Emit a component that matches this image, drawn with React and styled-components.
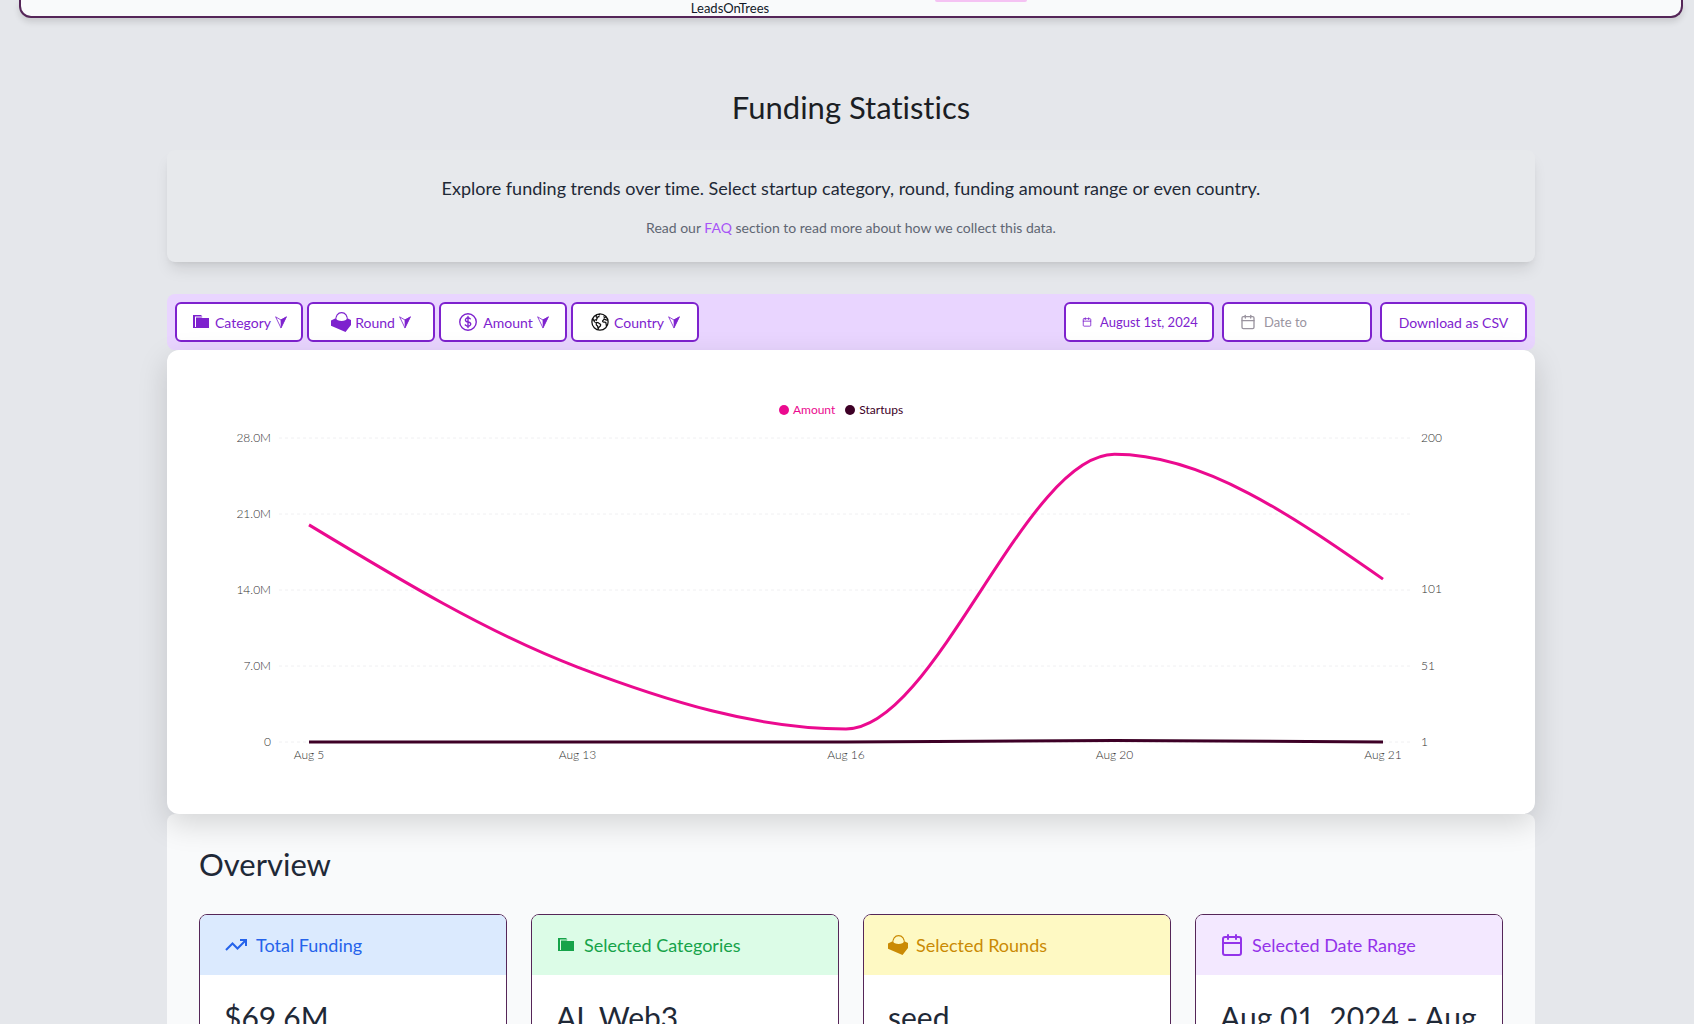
import React from "react";
import styled, { createGlobalStyle } from "styled-components";
import { Calendar, TrendingUp } from "lucide-react";
import { HiOutlineCurrencyDollar } from "react-icons/hi2";
import { IoEarthOutline } from "react-icons/io5";

const points = [
  { label: "Aug 5", amount: 20, startups: 1 },
  { label: "Aug 13", amount: 6.9, startups: 1 },
  { label: "Aug 16", amount: 1.2, startups: 1 },
  { label: "Aug 20", amount: 26.5, startups: 2 },
  { label: "Aug 21", amount: 15, startups: 1 },
];

const amountTicks = ["28.0M", "21.0M", "14.0M", "7.0M", "0"];
const startupTicks = [
  { label: "200", y: 20 },
  { label: "101", y: 171 },
  { label: "51", y: 248 },
  { label: "1", y: 324 },
];

const GRID_TOP = 20;
const GRID_BOTTOM = 324;
const FIRST_X = 142;
const STEP_X = 268.5;

const toY = (value, min, max) =>
  GRID_BOTTOM - ((value - min) / (max - min)) * (GRID_BOTTOM - GRID_TOP);

// monotone cubic, keeps the curve from overshooting the points
const monotonePath = (ys) => {
  const slopes = ys.slice(1).map((y, i) => (y - ys[i]) / STEP_X);
  const tangents = ys.map((_, i) => {
    if (i === 0 || i === ys.length - 1) return 0;
    const a = slopes[i - 1];
    const b = slopes[i];
    return (
      (Math.sign(a) + Math.sign(b)) *
      Math.min(Math.abs(a), Math.abs(b), Math.abs(a + b) / 4)
    );
  });
  const last = ys.length - 1;
  tangents[0] = (3 * slopes[0] - tangents[1]) / 2;
  tangents[last] = (3 * slopes[last - 1] - tangents[last - 1]) / 2;

  const third = STEP_X / 3;
  let d = `M${FIRST_X},${ys[0]}`;
  for (let i = 0; i < last; i++) {
    const x0 = FIRST_X + i * STEP_X;
    const x1 = x0 + STEP_X;
    d += `C${x0 + third},${ys[i] + tangents[i] * third},${x1 - third},${
      ys[i + 1] - tangents[i + 1] * third
    },${x1},${ys[i + 1]}`;
  }
  return d;
};

const FolderIcon = () => (
  <svg width="20" height="14" viewBox="-2 0 20 14" fill="currentColor">
    <path d="M0 0h8l1.500 1.500H2V12h1v1H0z" />
    <path d="M3 2.500h5.500l1 .5H16v10H2v-1h1z" />
  </svg>
);

const RoundIcon = () => (
  <svg width="20" height="20" viewBox="0 0 20 20">
    <path
      d="M0 8.500 4.600 6.200C5.300 8 8 9 10.700 9S15.600 8 16.400 6.200L20 8v5l-5.500 7L0 13.800z"
      fill="currentColor"
    />
    <path
      d="M5 8.500C4.200 4 7 .6 10.600.6S17 4 16.100 8.500"
      fill="none"
      stroke="currentColor"
      strokeWidth="1.100"
    />
  </svg>
);

const ArrowIcon = () => (
  <svg width="12" height="13" viewBox="0 0 12 13">
    <path
      d="M.6.8 6 4 11.400.8 6 12z"
      fill="none"
      stroke="currentColor"
      strokeWidth=".8"
    />
    <path d="M5.600 3.800 11.800.4 5.800 12.500z" fill="currentColor" />
  </svg>
);

const Chart = () => (
  <ChartSvg viewBox="0 0 1368 356" role="img" aria-label="Funding over time">
    {amountTicks.map((tick, i) => {
      const y = GRID_TOP + i * 76;
      return (
        <g key={tick}>
          <line
            x1="112"
            x2="1244"
            y1={y}
            y2={y}
            stroke="#f0f0f2"
            strokeDasharray="3 3"
          />
          <text x="104" y={y + 4} textAnchor="end">
            {tick}
          </text>
        </g>
      );
    })}
    {startupTicks.map((tick) => (
      <text key={tick.label} x="1254" y={tick.y + 4}>
        {tick.label}
      </text>
    ))}
    {points.map((p, i) => (
      <text
        key={p.label}
        x={FIRST_X + i * STEP_X}
        y="341"
        textAnchor="middle"
      >
        {p.label}
      </text>
    ))}
    <path
      d={monotonePath(points.map((p) => toY(p.amount, 0, 28)))}
      fill="none"
      stroke="#eb0a8f"
      strokeWidth="3"
    />
    <path
      d={monotonePath(points.map((p) => toY(p.startups, 1, 200)))}
      fill="none"
      stroke="#3d0026"
      strokeWidth="3"
    />
  </ChartSvg>
);

const filters = [
  { label: "Category", icon: <FolderIcon /> },
  { label: "Round", icon: <RoundIcon /> },
  { label: "Amount", icon: <HiOutlineCurrencyDollar size={22} /> },
  { label: "Country", icon: <IoEarthOutline size={20} color="#111" /> },
];

const stats = [
  {
    title: "Total Funding",
    value: "$69.6M",
    icon: <TrendingUp size={24} strokeLinecap="butt" strokeLinejoin="miter" />,
    color: "#2563eb",
    background: "#dbeafe",
  },
  {
    title: "Selected Categories",
    value: "AI, Web3",
    icon: <FolderIcon />,
    color: "#16a34a",
    background: "#dcfce7",
  },
  {
    title: "Selected Rounds",
    value: "seed",
    icon: <RoundIcon />,
    color: "#ca8a04",
    background: "#fef9c3",
  },
  {
    title: "Selected Date Range",
    value: "Aug 01, 2024 - Aug 21, 2024",
    icon: <Calendar size={24} />,
    color: "#9333ea",
    background: "#f3e8ff",
  },
];

export default function App() {
  return (
    <Page>
      <GlobalStyle />
      <Navbar>
        <Brand href="#">LeadsOnTrees</Brand>
        <NavPill />
      </Navbar>
      <Container>
        <Title>Funding Statistics</Title>
        <Intro>
          <IntroText>
            Explore funding trends over time. Select startup category, round,
            funding amount range or even country.
          </IntroText>
          <IntroNote>
            Read our <a href="#faq">FAQ</a> section to read more about how we
            collect this data.
          </IntroNote>
        </Intro>
        <FilterBar>
          <FilterGroup $gap={4}>
            {filters.map((item) => (
              <FilterButton key={item.label} $width={128}>
                {item.icon}
                {item.label}
                <ArrowIcon />
              </FilterButton>
            ))}
          </FilterGroup>
          <FilterGroup $gap={8}>
            <DateButton $width={150}>
              <Calendar size={10} />
              August 1st, 2024
            </DateButton>
            <DateButton $width={150} $empty>
              <Calendar size={16} />
              Date to
            </DateButton>
            <FilterButton $width={147}>Download as CSV</FilterButton>
          </FilterGroup>
        </FilterBar>
        <ChartCard>
          <Legend>
            <LegendItem $color="#eb0a8f">Amount</LegendItem>
            <LegendItem $color="#3d0026">Startups</LegendItem>
          </Legend>
          <Chart />
        </ChartCard>
        <Overview>
          <OverviewTitle>Overview</OverviewTitle>
          <Cards>
            {stats.map((item) => (
              <Card key={item.title}>
                <CardHeader $color={item.color} $background={item.background}>
                  {item.icon}
                  {item.title}
                </CardHeader>
                <CardValue>{item.value}</CardValue>
              </Card>
            ))}
          </Cards>
        </Overview>
      </Container>
    </Page>
  );
}

const GlobalStyle = createGlobalStyle`
  * {
    box-sizing: border-box;
  }
  body {
    margin: 0;
    background-color: #e5e7eb;
    font-family: Lato, "Open Sans", sans-serif;
    font-variant-ligatures: none;
    color: #1f2937;
  }
  h1, h2, h3, p, ul {
    margin: 0;
    padding: 0;
    font-weight: 400;
  }
`;

const Page = styled.div`
  height: 100vh;
  overflow: hidden;
  padding: 0 11px 0 19px;
`;

const Navbar = styled.nav`
  display: flex;
  justify-content: center;
  gap: 166px;
  height: 18px;
  padding-left: 16px;
  background-color: #f9fafb;
  border: 2px solid #552658;
  border-top: none;
  border-radius: 0 0 12px 12px;
  box-shadow: 0 4px 6px rgba(0, 0, 0, 0.12);
`;

const Brand = styled.a`
  font-size: 13px;
  line-height: 16px;
  color: #111827;
  text-decoration: none;
`;

const NavPill = styled.div`
  width: 92px;
  height: 2px;
  border-radius: 0 0 4px 4px;
  background-color: #f5c2f3;
`;

const Container = styled.main`
  max-width: 1368px;
  margin: 0 auto;
`;

const Title = styled.h1`
  margin: 69px 0 23px;
  font-size: 31px;
  line-height: 40px;
  text-align: center;
  color: #1b1e24;
`;

const Intro = styled.section`
  display: flex;
  flex-direction: column;
  gap: 16px;
  padding: 24px;
  text-align: center;
  border-radius: 8px;
  background-color: #e7e9ec;
  box-shadow: 0 10px 15px -3px rgba(0, 0, 0, 0.1),
    0 4px 6px -4px rgba(0, 0, 0, 0.1);
`;

const IntroText = styled.p`
  font-size: 18px;
  line-height: 28px;
`;

const IntroNote = styled.p`
  font-size: 14px;
  line-height: 20px;
  color: #5f6673;
  a {
    color: #a855f7;
    text-decoration: none;
  }
`;

const FilterBar = styled.div`
  display: flex;
  justify-content: space-between;
  margin-top: 32px;
  padding: 8px;
  border-radius: 8px;
  background-color: #e9d5ff;
`;

const FilterGroup = styled.div`
  display: flex;
  gap: ${(props) => props.$gap}px;
`;

const FilterButton = styled.button`
  display: flex;
  align-items: center;
  justify-content: center;
  gap: 4px;
  width: ${(props) => props.$width}px;
  height: 40px;
  padding: 0;
  border: 2px solid #7e22ce;
  border-radius: 6px;
  background-color: white;
  color: #7e22ce;
  font-family: inherit;
  font-size: 14px;
  white-space: nowrap;
`;

const DateButton = styled(FilterButton)`
  justify-content: flex-start;
  gap: 8px;
  padding-left: 16px;
  font-size: 13px;
  color: ${(props) => (props.$empty ? "#9a949f" : "#7e22ce")};
`;

const ChartCard = styled.section`
  position: relative;
  padding: 52px 0 40px;
  border-radius: 12px;
  background-color: white;
  box-shadow: 0 10px 30px rgba(0, 0, 0, 0.15);
`;

const Legend = styled.ul`
  display: flex;
  justify-content: center;
  gap: 10px;
  padding-right: 20px;
  list-style: none;
`;

const LegendItem = styled.li`
  display: flex;
  align-items: center;
  gap: 4px;
  font-size: 12px;
  line-height: 16px;
  color: ${(props) => props.$color};
  &::before {
    content: "";
    width: 10px;
    height: 10px;
    border-radius: 50%;
    background-color: ${(props) => props.$color};
  }
`;

const ChartSvg = styled.svg`
  display: block;
  width: 100%;
  font-size: 12px;
  font-weight: 300;
  fill: #333;
`;

const Overview = styled.section`
  padding: 32px;
  border-radius: 8px;
  background-color: #f9fafb;
`;

const OverviewTitle = styled.h2`
  font-size: 31px;
  line-height: 36px;
`;

const Cards = styled.div`
  display: grid;
  grid-template-columns: repeat(4, 1fr);
  gap: 24px;
  margin-top: 32px;
`;

const Card = styled.article`
  overflow: hidden;
  border: 1px solid #552658;
  border-radius: 8px;
  background-color: white;
`;

const CardHeader = styled.h3`
  display: flex;
  align-items: center;
  gap: 8px;
  height: 60px;
  padding: 0 24px;
  font-size: 18px;
  color: ${(props) => props.$color};
  background-color: ${(props) => props.$background};
`;

const CardValue = styled.p`
  padding: 24px;
  font-size: 30px;
  line-height: 36px;
`;
